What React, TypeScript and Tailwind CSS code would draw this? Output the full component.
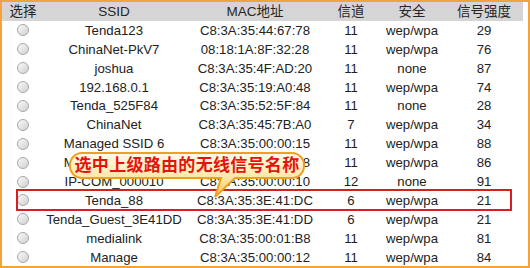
const rows = [
  ['Tenda123', 'C8:3A:35:44:67:78', '11', 'wep/wpa', '29'],
  ['ChinaNet-PkV7', '08:18:1A:8F:32:28', '11', 'wep/wpa', '76'],
  ['joshua', 'C8:3A:35:4F:AD:20', '11', 'none', '87'],
  ['192.168.0.1', 'C8:3A:35:19:A0:48', '11', 'wep/wpa', '74'],
  ['Tenda_525F84', 'C8:3A:35:52:5F:84', '11', 'none', '28'],
  ['ChinaNet', 'C8:3A:35:45:7B:A0', '7', 'wep/wpa', '34'],
  ['Managed SSID 6', 'C8:3A:35:00:00:15', '11', 'wep/wpa', '88'],
  ['Managed SSID 7', 'C8:3A:35:00:00:08', '11', 'wep/wpa', '86'],
  ['IP-COM_000010', 'C8:3A:35:00:00:10', '12', 'none', '91'],
  ['Tenda_88', 'C8:3A:35:3E:41:DC', '6', 'wep/wpa', '21'],
  ['Tenda_Guest_3E41DD', 'C8:3A:35:3E:41:DD', '6', 'wep/wpa', '21'],
  ['medialink', 'C8:3A:35:00:01:B8', '11', 'wep/wpa', '81'],
  ['Manage', 'C8:3A:35:00:00:12', '11', 'wep/wpa', '84'],
]

const Radio = () => (
  <span className="block w-[12px] h-[12px] rounded-full border border-[#a8a8a8] bg-gradient-to-br from-[#fafafa] to-[#d0d0d0]" />
)

const App = () => {
  return (
    <div
      className="relative w-[530px] h-[268px] border-2 border-[#f2a43a] bg-white overflow-hidden text-[13.2px] text-[#222]"
      style={{ fontFamily: '"Liberation Sans", "Noto Sans CJK SC", sans-serif' }}
    >
      {/* header */}
      <div className="flex w-[521px] h-[19px] items-center bg-[#d5d5d5] text-[#262626] text-[13.5px] leading-none">
        <div className="w-[42px] text-center">选择</div>
        <div className="w-[140px] text-center">SSID</div>
        <div className="w-[142px] text-center">MAC地址</div>
        <div className="w-[50px] text-center">信道</div>
        <div className="w-[72px] text-center">安全</div>
        <div className="w-[72px] text-center">信号强度</div>
      </div>

      {rows.map((r, i) => (
        <div key={i} className="relative flex w-[521px] h-[18.9px] items-center leading-none">
          <div className="w-[42px] flex justify-center"><Radio /></div>
          <div className="w-[140px] text-center whitespace-nowrap">{r[0]}</div>
          <div className="w-[142px] text-center">{r[1]}</div>
          <div className="w-[50px] text-center">{r[2]}</div>
          <div className="w-[72px] text-center">{r[3]}</div>
          <div className="w-[72px] text-center">{r[4]}</div>
          {r[0] === 'Tenda_88' && (
            <div className="absolute left-[14px] right-[11px] top-[-2px] bottom-[-1px] border-2 border-[#d81e1e]" />
          )}
        </div>
      ))}

      {/* callout bubble */}
      <div className="absolute left-[67px] top-[150px] w-[236px] h-[27px]">
        <svg className="absolute left-0 top-0 overflow-visible" width="236" height="50">
          <defs>
            <linearGradient id="bub" x1="0" y1="0" x2="0" y2="1">
              <stop offset="0" stopColor="#fffbe6" />
              <stop offset="0.5" stopColor="#ffe9b0" />
              <stop offset="1" stopColor="#ffc861" />
            </linearGradient>
          </defs>
          <path
            d="M13 1 H223 A12 12 0 0 1 235 13 V14 A12 12 0 0 1 223 26 H166 L146 45 L152 26 H13 A12 12 0 0 1 1 14 V13 A12 12 0 0 1 13 1 Z"
            fill="url(#bub)"
            stroke="#f0a020"
            strokeWidth="2"
          />
        </svg>
        <div className="relative h-full flex items-center justify-center font-bold text-[17px] text-[#e3140c] tracking-[0.3px]">
          选中上级路由的无线信号名称
        </div>
      </div>
    </div>
  )
}

export default App
